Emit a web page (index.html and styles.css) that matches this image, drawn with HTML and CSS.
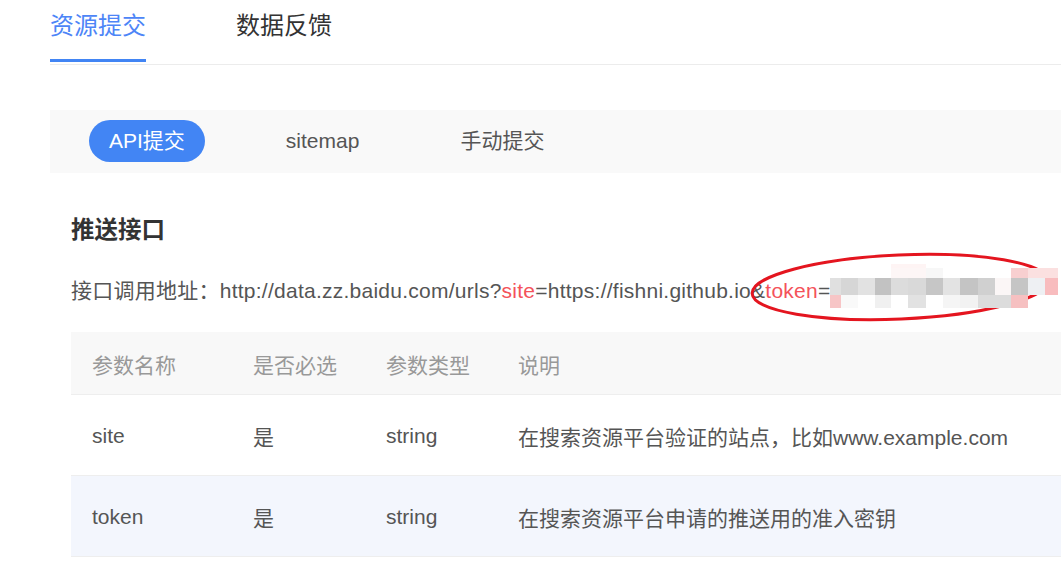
FILE: index.html
```html
<!DOCTYPE html>
<html lang="zh-CN">
<head>
<meta charset="utf-8">
<title>资源提交</title>
<link rel="stylesheet" href="styles.css">
</head>
<body>
<div class="page">
  <div class="tabs">
    <div class="tab active">资源提交</div>
    <div class="tab">数据反馈</div>
  </div>

  <div class="subtabs">
    <div class="subtab active">API提交</div>
    <div class="subtab">sitemap</div>
    <div class="subtab">手动提交</div>
  </div>

  <div class="section">
    <h2 class="title">推送接口</h2>
    <div class="url-line">
      <span>接口调用地址：http://data.zz.baidu.com/urls?</span><span class="hl">site</span><span>=https://fishni.github.io&amp;</span><span class="hl">token</span><span>=</span><span class="mask">
        <svg class="mask-svg" width="230" height="50" viewBox="0 0 230 50">
          <rect x="61" y="6" width="35" height="4" fill="#fef4f4"/>
          <rect x="61" y="10" width="35" height="10" fill="#fdf6f6"/>
          <rect x="96" y="10" width="17" height="10" fill="#f7f7f7"/>
          <rect x="181" y="10" width="17" height="10" fill="#f8cfd0"/>
          <rect x="198" y="10" width="30" height="10" fill="#fbe0e0"/>
          <rect x="0" y="20" width="11" height="17" fill="#e0e0e0"/>
          <rect x="11" y="20" width="17" height="17" fill="#d6d6d6"/>
          <rect x="28" y="20" width="17" height="17" fill="#e2e2e2"/>
          <rect x="45" y="20" width="16" height="17" fill="#c2c2c2"/>
          <rect x="61" y="20" width="17" height="17" fill="#dcdcdc"/>
          <rect x="78" y="20" width="18" height="17" fill="#d9d9d9"/>
          <rect x="96" y="20" width="17" height="17" fill="#c6c6c6"/>
          <rect x="113" y="20" width="17" height="17" fill="#e3e3e3"/>
          <rect x="130" y="20" width="18" height="17" fill="#c4c4c4"/>
          <rect x="148" y="20" width="17" height="17" fill="#d0d0d0"/>
          <rect x="165" y="20" width="16" height="17" fill="#fbf6f6"/>
          <rect x="181" y="20" width="17" height="17" fill="#c5c5c5"/>
          <rect x="198" y="20" width="17" height="17" fill="#eef0f3"/>
          <rect x="215" y="20" width="13" height="17" fill="#f8bcbe"/>
          <rect x="0" y="37" width="11" height="13" fill="#f7c5c6"/>
          <rect x="11" y="37" width="17" height="13" fill="#f9f9f9"/>
          <rect x="45" y="37" width="16" height="13" fill="#f0f0f0"/>
          <rect x="78" y="37" width="18" height="13" fill="#e2e2e2"/>
          <rect x="113" y="37" width="17" height="13" fill="#f5f5f5"/>
          <rect x="130" y="37" width="18" height="13" fill="#f2f2f2"/>
          <rect x="148" y="37" width="33" height="13" fill="#dcdcdc"/>
          <rect x="181" y="37" width="17" height="13" fill="#f6c0c1"/>
        </svg>
      </span>
      <svg class="circle" width="321" height="85" viewBox="0 0 321 85">
        <ellipse cx="160" cy="42" rx="148" ry="32" transform="rotate(-2.5 160 42)" fill="none" stroke="#e4151f" stroke-width="3"/>
      </svg>
    </div>

    <div class="table">
      <div class="row head">
        <div class="cell">参数名称</div>
        <div class="cell">是否必选</div>
        <div class="cell">参数类型</div>
        <div class="cell">说明</div>
      </div>
      <div class="row">
        <div class="cell">site</div>
        <div class="cell">是</div>
        <div class="cell">string</div>
        <div class="cell">在搜索资源平台验证的站点，比如www.example.com</div>
      </div>
      <div class="row alt">
        <div class="cell">token</div>
        <div class="cell">是</div>
        <div class="cell">string</div>
        <div class="cell">在搜索资源平台申请的推送用的准入密钥</div>
      </div>
    </div>
  </div>
</div>
</body>
</html>
```

FILE: styles.css
```css
html, body {
  margin: 0;
  padding: 0;
  background: #fff;
  overflow: hidden;
}

body {
  font-family: "Liberation Sans", "Noto Sans CJK SC", sans-serif;
  color: #333;
}

.page {
  padding-left: 50px;
  width: 1011px;
}

.tabs {
  display: flex;
  align-items: flex-start;
  gap: 90px;
  height: 64px;
  border-bottom: 1px solid #ececec;
}

.tab {
  font-size: 24px;
  line-height: 32px;
  padding-top: 10px;
  height: 49px;
  color: #333;
  border-bottom: 3px solid transparent;
}

.tab.active {
  color: #4d85f7;
  border-bottom-color: #4285f4;
}

.subtabs {
  margin-top: 45px;
  height: 63px;
  background: #f9f9f9;
  display: flex;
  align-items: flex-start;
  gap: 61px;
  padding: 10px 39px 0;
  box-sizing: border-box;
}

.subtab {
  height: 42px;
  line-height: 42px;
  padding: 0 20px;
  border-radius: 21px;
  font-size: 21px;
  color: #555;
}

.subtab.active {
  background: #4285f4;
  color: #fff;
}

.section {
  padding-left: 21px;
  padding-top: 41px;
}

.title {
  margin: 0;
  font-size: 23.5px;
  line-height: 32px;
  font-weight: bold;
  color: #333;
}

.url-line {
  position: relative;
  margin-top: 29px;
  font-size: 21px;
  line-height: 32px;
  height: 32px;
  color: #555;
  white-space: nowrap;
  letter-spacing: 0.25px;
}

.hl {
  color: #f4525a;
}

.mask {
  display: inline-block;
  position: relative;
  width: 218px;
  height: 32px;
  vertical-align: top;
  z-index: 2;
}

.mask-svg {
  position: absolute;
  left: 0;
  top: -17px;
}

.circle {
  position: absolute;
  left: 669px;
  top: -30px;
  z-index: 1;
}

.table {
  margin-top: 25px;
}

.row {
  display: grid;
  grid-template-columns: 161px 133px 132px 1fr;
  align-items: center;
  height: 80px;
  border-bottom: 1px solid #eeeeee;
  font-size: 21px;
  color: #555;
}

.row.head {
  height: 62px;
  background: #f8f8f8;
  color: #999;
}

.row.alt {
  background: #f3f6fd;
}

.cell {
  padding-left: 21px;
  padding-top: 1px;
  white-space: nowrap;
}
```
